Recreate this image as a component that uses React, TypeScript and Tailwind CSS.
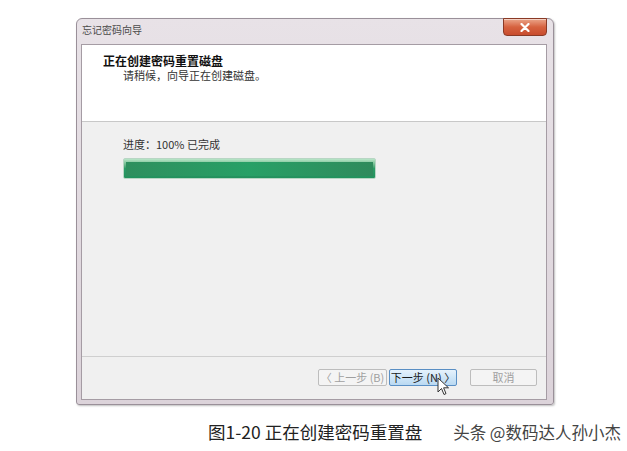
import React from "react";

const cjk = { fontFamily: '"Noto Sans CJK SC", "Noto Sans", sans-serif' };

function CloseButton() {
  return (
    <div className="mt-[-1px] mr-[6px] flex h-[18px] w-[44px] items-center justify-center rounded-b-[4px] border border-[#8a3a26] bg-gradient-to-b from-[#eaa58a] via-[#d6623f] to-[#c84c2e] shadow-[inset_0_1px_0_rgba(255,255,255,0.5)]">
      <svg width="10" height="9" viewBox="0 0 10 9">
        <path d="M1.5 1 L8.5 8 M8.5 1 L1.5 8" stroke="#fff" strokeWidth="2.2" strokeLinecap="round" />
      </svg>
    </div>
  );
}

function WizardButton({ children, active, disabled }: { children: React.ReactNode; active?: boolean; disabled?: boolean }) {
  const base =
    "flex h-[17px] items-center justify-center rounded-[2px] border text-[11px] leading-none";
  const look = active
    ? "border-[#5a8fc4] bg-gradient-to-b from-[#e6f2fc] to-[#b9d9f2] text-[#1a1a1a]"
    : "border-[#bdbdbd] bg-[#f4f4f4] " + (disabled ? "text-[#a0a0a0]" : "text-[#555]");
  return <div className={`${base} ${look}`}>{children}</div>;
}

export default function App() {
  return (
    <div className="h-[451px] w-[627px] overflow-hidden bg-white" style={cjk}>
      <div className="pl-[76px] pt-[18px]">
        {/* wizard window */}
        <div className="relative flex h-[387px] w-[478px] flex-col rounded-t-[6px] rounded-b-[3px] border border-[#9a9099] bg-gradient-to-b from-[#e8e2e7] to-[#dcd3da] shadow-[1px_1px_2px_rgba(0,0,0,0.25)]">
          {/* title bar */}
          <div className="flex h-[25px] items-start justify-between">
            <span className="pl-[5px] pt-[5px] text-[10px] leading-[12px] text-[#4a4a4a]">忘记密码向导</span>
            <CloseButton />
          </div>
          {/* client area */}
          <div className="ml-[4px] mr-[6px] flex h-[356px] flex-col border border-[#a59ca4] bg-[#f0f0f0]">
            <div className="h-[77px] border-b border-[#c8c8c8] bg-white pl-[21px] pt-[8px]">
              <div className="text-[12px] font-bold leading-[15px] text-[#111]">正在创建密码重置磁盘</div>
              <div className="pl-[20px] text-[11px] leading-[14px] text-[#333]">请稍候，向导正在创建磁盘。</div>
            </div>
            <div className="h-[235px] border-b border-[#cfcfcf] pl-[41px] pt-[15px]">
              <div className="text-[11px] leading-[14px] text-[#333]">进度：100% 已完成</div>
              <div className="mt-[7px] h-[21px] w-[253px] rounded-[2px] border border-[#b8d6c4] bg-gradient-to-b from-[#b9e6c8] via-[#2a9b66] to-[#23915d] p-0">
                <div className="mx-[2px] mt-[3px] h-[14px] bg-gradient-to-r from-[#2e8f5e] via-[#27a066] to-[#2f8a5c]" />
              </div>
            </div>
            <div className="flex flex-1 items-center justify-end gap-[2px] pb-[1px] pr-[9px]">
              <WizardButton disabled>
                <span className="w-[67px] text-center">〈 上一步 (B)</span>
              </WizardButton>
              <div className="relative">
                <WizardButton active>
                  <span className="w-[66px] text-center">下一步 (N) 〉</span>
                </WizardButton>
                <svg className="absolute left-[48px] top-[8px]" width="13" height="19" viewBox="0 0 13 19">
                  <path d="M1 1 L1 15 L4.5 11.5 L7 17.5 L9 16.6 L6.6 10.8 L11.5 10.8 Z" fill="#fff" stroke="#333" strokeWidth="1" strokeLinejoin="round" />
                </svg>
              </div>
              <div className="ml-[11px]">
                <WizardButton disabled>
                  <span className="w-[65px] text-center">取消</span>
                </WizardButton>
              </div>
            </div>
          </div>
        </div>
      </div>
      {/* caption row */}
      <div className="mt-[16px] flex items-center">
        <span className="ml-[208px] text-[17.5px] leading-[22px] text-[#222]">图1-20 正在创建密码重置盘</span>
        <span className="ml-[31px] text-[16.5px] leading-[22px] text-[#444]">头条 @数码达人孙小杰</span>
      </div>
    </div>
  );
}
